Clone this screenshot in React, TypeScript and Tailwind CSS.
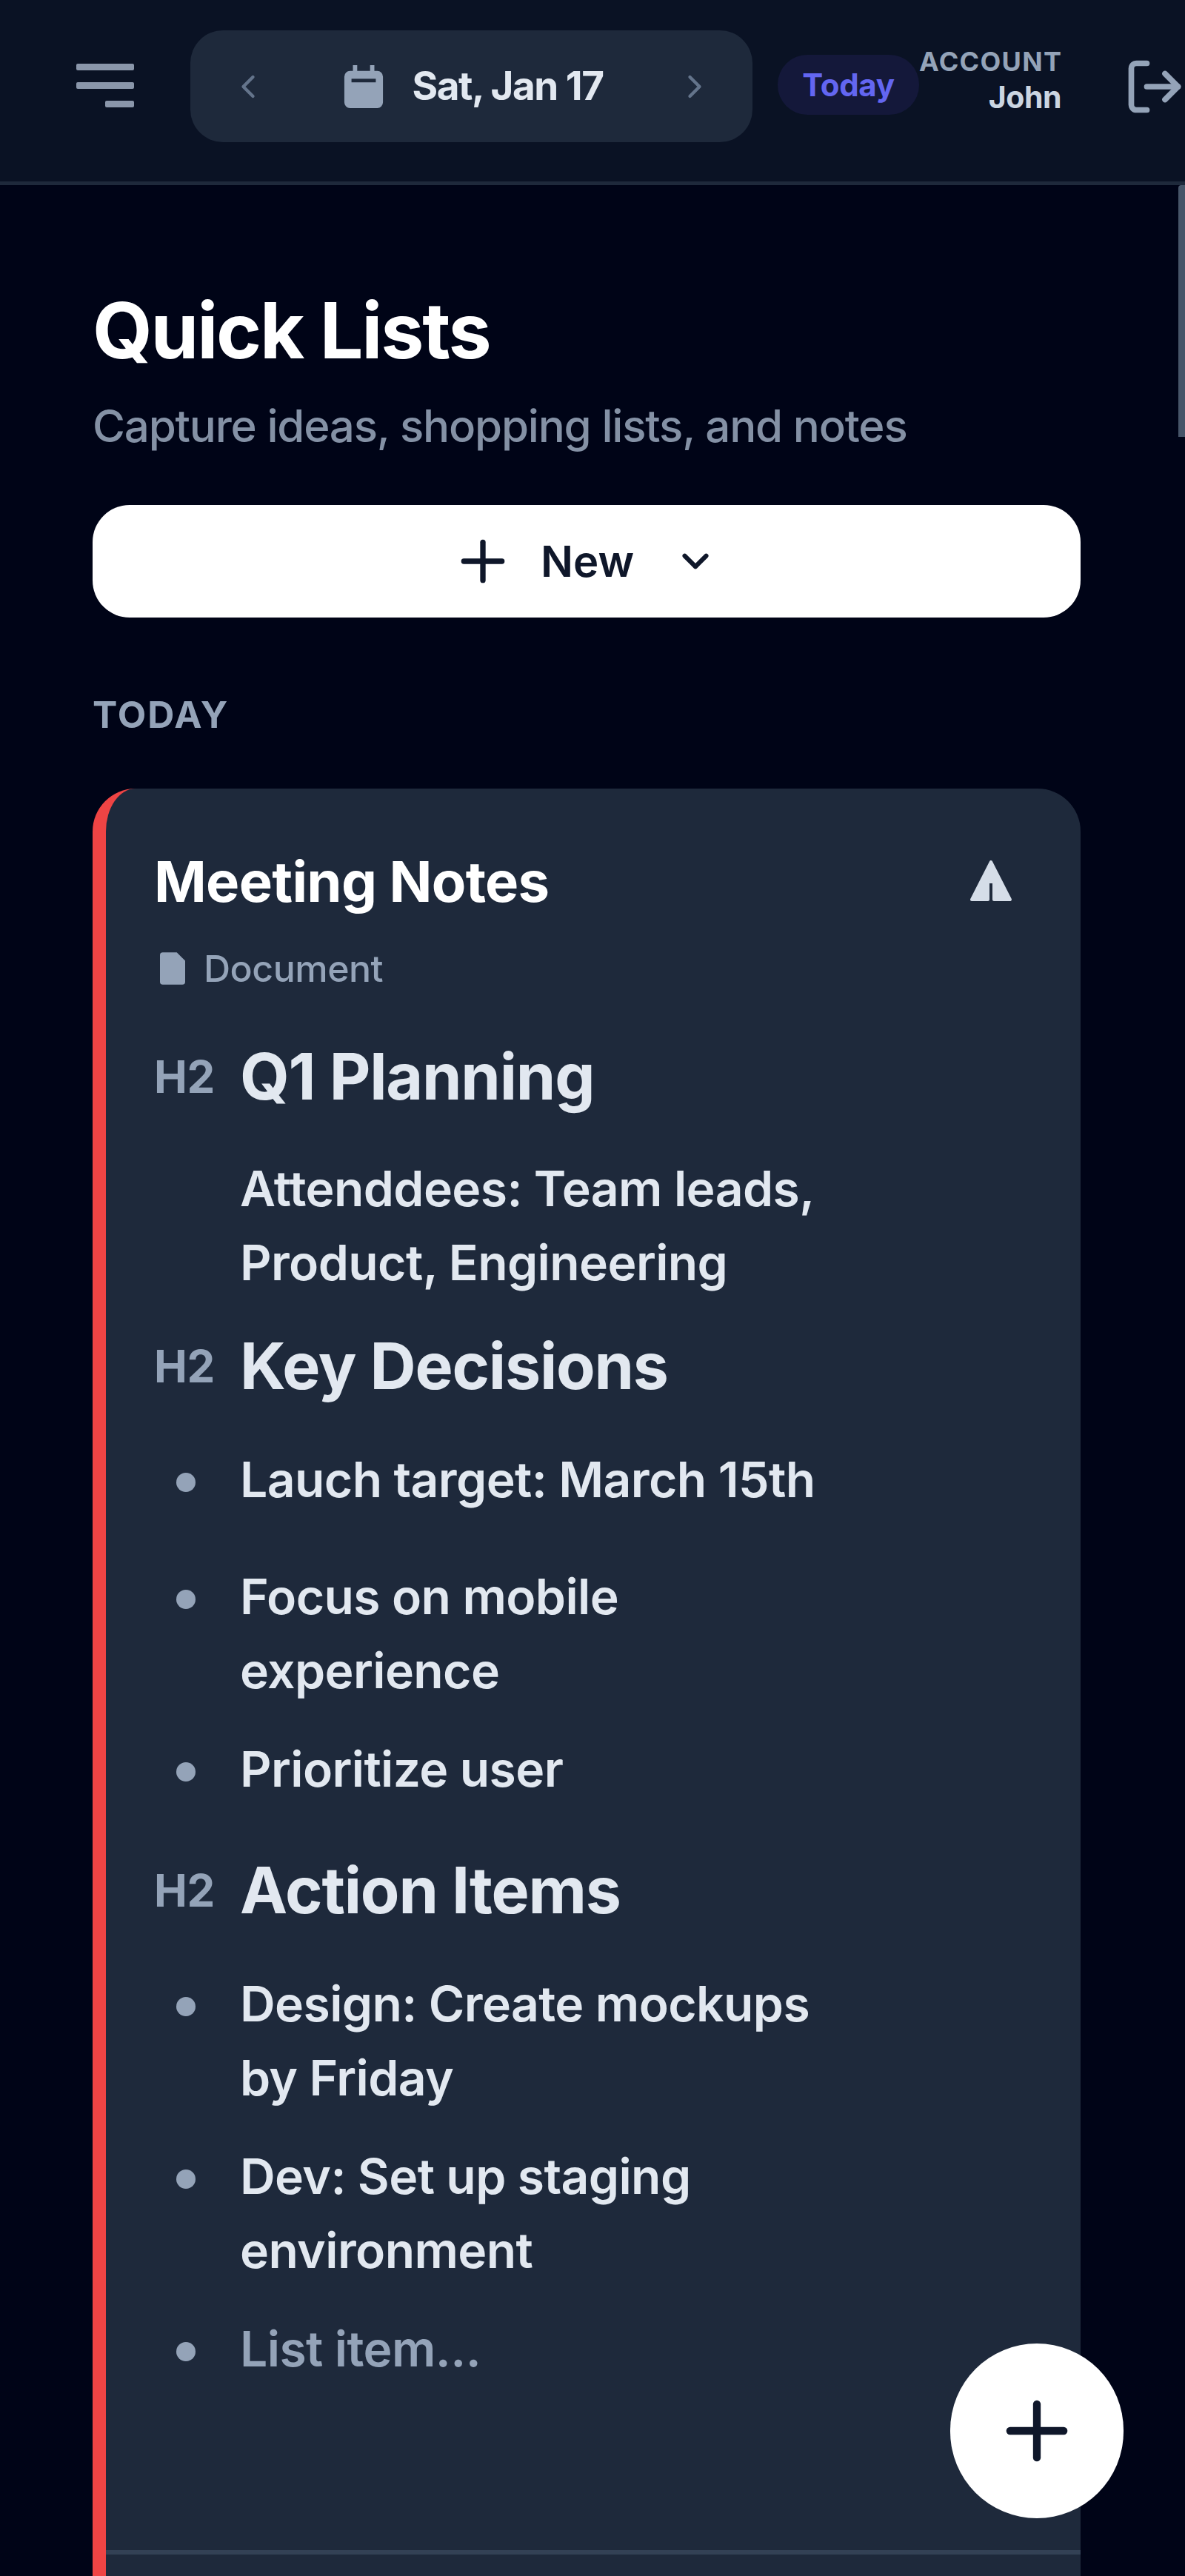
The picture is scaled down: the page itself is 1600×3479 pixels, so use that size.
import { ChevronDown, ChevronLeft, ChevronRight, LogOut, Plus } from 'lucide-react';

const inter = 'font-["Inter","Noto_Sans",sans-serif]';

function Heading({ children, className }: { children: string; className: string }) {
  return (
    <div className={`flex items-center ${className}`}>
      <span className="w-[116px] shrink-0 text-[60px] font-bold tracking-[-0.3px] text-[#94a3b8]">H2</span>
      <span className="text-[86px] font-bold leading-[100px] tracking-[-1.2px] text-[#e2e8f0]">{children}</span>
    </div>
  );
}

function Bullet({ children, className, muted }: { children: string; className: string; muted?: boolean }) {
  return (
    <div className={`flex ${className}`}>
      <div className="flex h-[100px] w-[116px] shrink-0 items-center pl-[30px] pt-[8px]">
        <span className="h-[26px] w-[26px] rounded-full bg-[#94a3b8]" />
      </div>
      <p className={`w-[800px] text-[66px] font-semibold leading-[100px] tracking-[-0.6px] ${muted ? 'text-[#94a3b8]' : 'text-[#e2e8f0]'}`}>
        {children}
      </p>
    </div>
  );
}

export default function App() {
  return (
    <div className={`relative h-[3479px] w-[1600px] overflow-hidden bg-[#000417] ${inter}`}>
      <header className="flex h-[250px] items-start overflow-hidden border-b-[5px] border-[#1e293b] bg-[#0a1224]">
        <button className="ml-[103px] mt-[83px] w-[78px] shrink-0">
          <svg width="78" height="66" viewBox="0 0 78 66" className="block">
            <rect x="0" y="3" width="78" height="9" rx="2" fill="#8a96aa" />
            <rect x="0" y="28" width="78" height="9" rx="2" fill="#8a96aa" />
            <rect x="39" y="53" width="39" height="9" rx="2" fill="#8a96aa" />
          </svg>
        </button>
        <div className="ml-[76px] mt-[41px] flex h-[151px] w-[759px] shrink-0 items-center rounded-[44px] bg-[#1e293b] pl-[52px] pr-[52px]">
          <ChevronLeft className="h-[52px] w-[52px] text-[#64748b]" strokeWidth={2} />
          <div className="flex flex-1 items-center justify-center gap-[38px] pl-[4px]">
            <svg width="56" height="60" viewBox="0 0 58 60" className="block">
              <path d="M14 0h6v8h18V0h6v8h4a8 8 0 0 1 8 8v36a8 8 0 0 1-8 8H10a8 8 0 0 1-8-8V16a8 8 0 0 1 8-8h4z" fill="#94a3b8" />
              <rect x="12" y="19" width="34" height="5" fill="#1e293b" />
            </svg>
            <span className="text-[53px] font-bold tracking-[-1.5px] text-[#e2e8f0]">Sat, Jan 17</span>
          </div>
          <ChevronRight className="h-[52px] w-[52px] text-[#64748b]" strokeWidth={2} />
        </div>
        <div className="ml-[34px] mt-[74px] flex h-[81px] w-[191px] shrink-0 items-center justify-center rounded-[40px] bg-[#14183a] text-[42px] font-bold tracking-[-0.3px] text-[#6366f1]">
          Today
        </div>
        <div className="mt-[60px] w-[192px] shrink-0 text-right">
          <div className="text-[36px] font-bold leading-[46px] tracking-[1.3px] text-[#94a3b8]">ACCOUNT</div>
          <div className="text-[41px] font-bold leading-[50px] tracking-[-0.5px] text-[#cbd5e1]">John</div>
        </div>
        <LogOut className="ml-[84px] mt-[75px] h-[84px] w-[84px] shrink-0 text-[#94a3b8]" strokeWidth={2.2} />
      </header>

      <main className="pl-[125px] pr-[141px]">
        <h1 className="mt-[138px] text-[104px] font-bold leading-[116px] tracking-[-2.2px] text-white">Quick Lists</h1>
        <p className="mt-[28px] text-[60px] font-medium leading-[86px] tracking-[-1.2px] text-[#8491a5]">Capture ideas, shopping lists, and notes</p>
        <button className="mt-[64px] flex h-[152px] w-full items-center justify-center rounded-[50px] bg-white pr-[8px] text-[#0f172a]">
          <Plus className="h-[88px] w-[88px]" strokeWidth={2} />
          <span className="ml-[34px] text-[58px] font-semibold">New</span>
          <ChevronDown className="ml-[54px] h-[58px] w-[58px]" strokeWidth={2.5} />
        </button>
        <div className="mt-[96px] text-[50px] font-bold leading-[70px] tracking-[2px] text-[#94a3b8]">TODAY</div>

        <section className="mt-[65px] h-[2600px] rounded-[58px] border-l-[18px] border-[#ef4444] bg-[#1e293b] pl-[65px] pr-[92px]">
          <div className="flex items-center justify-between pt-[85px]">
            <h2 className="text-[76px] font-bold leading-[80px] tracking-[-0.7px] text-white">Meeting Notes</h2>
            <svg width="58" height="58" viewBox="0 0 58 58" className="block">
              <path d="M29 3 55 54H33V30h-8v24H3z" fill="#d5dde8" stroke="#d5dde8" strokeWidth="4" strokeLinejoin="round" />
            </svg>
          </div>
          <div className="mt-[48px] flex items-center">
            <svg width="34" height="46" viewBox="0 0 36 46" className="ml-[8px] block">
              <path d="M4 0h20l12 12v30a4 4 0 0 1-4 4H4a4 4 0 0 1-4-4V4a4 4 0 0 1 4-4z" fill="#94a3b8" />
            </svg>
            <span className="ml-[25px] text-[50px] font-medium leading-[60px] tracking-[-0.5px] text-[#94a3b8]">Document</span>
          </div>
          <Heading className="mt-[66px]">Q1 Planning</Heading>
          <div className="mt-[51px] pl-[116px]">
            <p className="w-[800px] text-[66px] font-semibold leading-[100px] tracking-[-0.6px] text-[#e2e8f0]">
              Attenddees: Team leads, Product, Engineering
            </p>
          </div>
          <Heading className="mt-[40px]">Key Decisions</Heading>
          <Bullet className="mt-[53px]">Lauch target: March 15th</Bullet>
          <Bullet className="mt-[58px]">Focus on mobile experience</Bullet>
          <Bullet className="mt-[33px]">Prioritize user</Bullet>
          <Heading className="mt-[64px]">Action Items</Heading>
          <Bullet className="mt-[53px]">Design: Create mockups by Friday</Bullet>
          <Bullet className="mt-[33px]">Dev: Set up staging environment</Bullet>
          <Bullet className="mt-[33px]" muted>List item...</Bullet>
          <div className="-ml-[65px] -mr-[92px] mt-[222px] h-[6px] bg-[#334155]" />
        </section>
      </main>

      <button className="absolute left-[1283px] top-[3165px] flex h-[236px] w-[234px] items-center justify-center rounded-full bg-white text-[#0f172a]">
        <Plus className="h-[124px] w-[124px]" strokeWidth={2} />
      </button>
      <div className="absolute right-0 top-[250px] h-[340px] w-[9px] rounded-tl-[4px] bg-[#475569]" />
    </div>
  );
}
